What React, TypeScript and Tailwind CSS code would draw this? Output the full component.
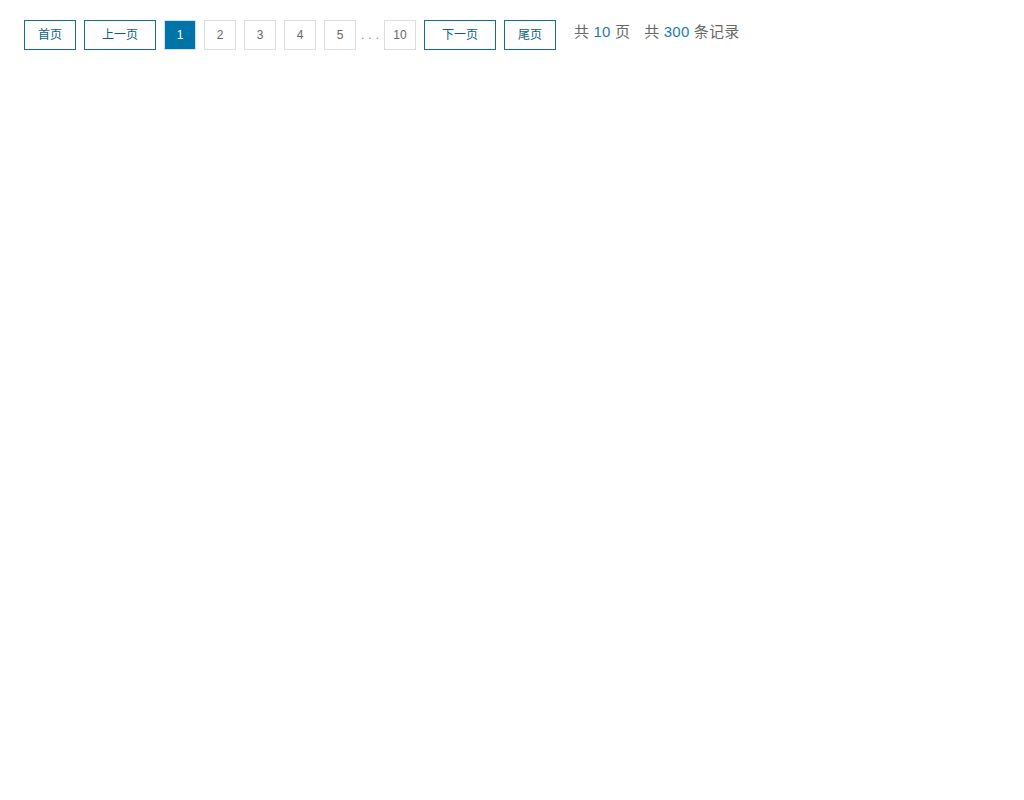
import React from 'react';

const font = { fontFamily: '"Liberation Sans", "Noto Sans CJK SC", sans-serif' };

const TextButton = ({ label, width }: { label: string; width: string }) => (
    <button
        className={`${width} h-[30px] border border-[#176e8a] bg-white text-xs text-[#0b5f7c] flex items-center justify-center pb-[1px]`}
    >
        {label}
    </button>
);

const PageButton = ({ page, active }: { page: number; active?: boolean }) =>
    active ? (
        <button className="w-8 h-[30px] border border-[#cde4ee] bg-[#0073a8] text-xs text-white flex items-center justify-center pb-[1px]">
            {page}
        </button>
    ) : (
        <button className="w-8 h-[30px] border border-[#dcdcdc] bg-white text-xs text-[#666] flex items-center justify-center pb-[1px]">
            {page}
        </button>
    );

const App = () => {
    return (
        <div className="min-h-[800px] bg-white pt-5 pl-6" style={font}>
            <div className="flex items-start">
                <TextButton label="首页" width="w-[52px]" />
                <div className="ml-2">
                    <TextButton label="上一页" width="w-[72px]" />
                </div>
                <div className="ml-2 flex items-center gap-2">
                    <PageButton page={1} active />
                    <PageButton page={2} />
                    <PageButton page={3} />
                    <PageButton page={4} />
                    <PageButton page={5} />
                </div>
                <span className="w-7 h-[30px] flex items-center justify-center pl-[4px] text-xs text-[#888] tracking-[4px]">
                    ...
                </span>
                <PageButton page={10} />
                <div className="ml-2">
                    <TextButton label="下一页" width="w-[72px]" />
                </div>
                <div className="ml-2">
                    <TextButton label="尾页" width="w-[52px]" />
                </div>
                <div className="ml-[18px] mt-[2px] text-[15px] leading-[20px] text-[#666] flex items-center">
                    <span className="tracking-[0.2px]">
                        共 <span className="text-[#1a7bb0]">10</span> 页
                    </span>
                    <span className="ml-[14px] tracking-[0.2px]">
                        共 <span className="text-[#1a7bb0]">300</span> 条记录
                    </span>
                </div>
            </div>
        </div>
    );
};

export default App;
